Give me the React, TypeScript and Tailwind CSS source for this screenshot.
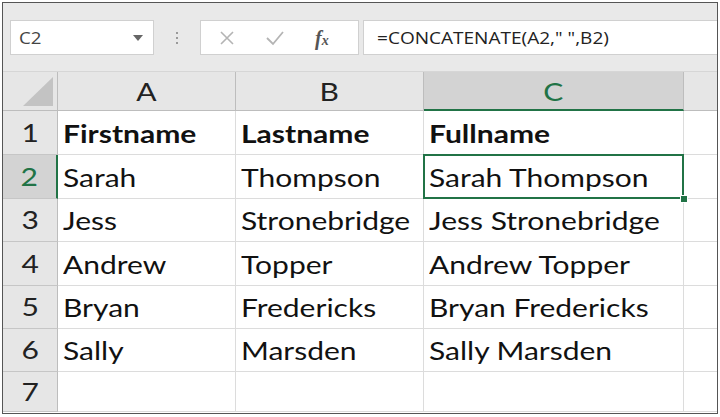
const cols = ["A", "B", "C"];
const rows = [
  ["Firstname", "Lastname", "Fullname"],
  ["Sarah", "Thompson", "Sarah Thompson"],
  ["Jess", "Stronebridge", "Jess Stronebridge"],
  ["Andrew", "Topper", "Andrew Topper"],
  ["Bryan", "Fredericks", "Bryan Fredericks"],
  ["Sally", "Marsden", "Sally Marsden"],
  ["", "", ""],
];
const heights = ["h-[44px]", "h-[44px]", "h-[43px]", "h-[44px]", "h-[43px]", "h-[43px]", "h-[40px]"];

function Toolbar() {
  return (
    <div className="h-[69px] bg-[#e9e9e9] flex items-start pt-[17px] pl-[7px] border-b border-[#d6d6d6] font-['Open_Sans',sans-serif]">
      {/* Name box */}
      <div className="w-[144px] h-[35px] bg-white border border-[#d0d0d0] flex items-center justify-between pl-[8px] pr-[10px]">
        <span className="inline-block origin-left scale-x-[1.1] text-[17px] text-[#444]">C2</span>
        <svg width="10" height="6" viewBox="0 0 10 6">
          <path d="M0 0 L10 0 L5 6 Z" fill="#666" />
        </svg>
      </div>
      {/* Dots */}
      <div className="w-[46px] h-[35px] flex flex-col items-center justify-center gap-[3px]">
        <span className="w-[2px] h-[2px] bg-[#9a9a9a]" />
        <span className="w-[2px] h-[2px] bg-[#9a9a9a]" />
        <span className="w-[2px] h-[2px] bg-[#9a9a9a]" />
      </div>
      {/* Cancel / enter / fx */}
      <div className="w-[159px] h-[35px] bg-white border border-[#d0d0d0] flex items-center pl-[18px] gap-[30px]">
        <svg width="16" height="16" viewBox="0 0 16 16">
          <path d="M2 2 L14 14 M14 2 L2 14" stroke="#b4b4b4" strokeWidth="1.6" />
        </svg>
        <svg width="20" height="16" viewBox="0 0 20 16">
          <path d="M2 8 L8 14 L18 2" stroke="#b4b4b4" strokeWidth="1.8" fill="none" />
        </svg>
        <span className="text-[20px] italic font-bold text-[#555] font-['Liberation_Serif',serif] leading-none">
          f<span className="text-[14px]">x</span>
        </span>
      </div>
      {/* Formula */}
      <div className="flex-1 ml-[4px] h-[35px] bg-white border border-[#d0d0d0] border-r-0 flex items-center pl-[13px]">
        <span className="inline-block origin-left scale-x-[1.12] text-[17px] text-[#222] whitespace-nowrap">
          =CONCATENATE(A2," ",B2)
        </span>
      </div>
    </div>
  );
}

function Wide({ children, center }: { children: React.ReactNode; center?: boolean }) {
  return (
    <span className={`inline-block scale-x-[1.2] ${center ? "origin-center" : "origin-left"}`}>
      {children}
    </span>
  );
}

export default function App() {
  return (
    <div className="w-[720px] h-[417px] bg-white pt-[2px] pl-[2px] font-['Lato',sans-serif]">
      <div className="w-[716px] h-[412px] border-[1.5px] border-[#555] overflow-hidden bg-white">
        <Toolbar />
        <div className="grid grid-cols-[55px_178px_188px_260px_1fr]">
          {/* header row */}
          <div className="h-[39px] bg-[#e6e6e6] border-r border-[#bdbdbd] border-b border-b-[#bdbdbd] flex items-end justify-end pr-[4px] pb-[4px]">
            <svg width="30" height="29" viewBox="0 0 30 29">
              <path d="M30 0 L30 29 L0 29 Z" fill="#c3c3c3" />
            </svg>
          </div>
          {cols.map((c) => (
            <div
              key={c}
              className={
                c === "C"
                  ? "h-[39px] bg-[#d3d3d3] border-r border-[#bdbdbd] border-b-2 border-b-[#217346] flex items-center justify-center pt-[2px] text-[25px] text-[#217346]"
                  : "h-[39px] bg-[#e6e6e6] border-r border-[#bdbdbd] border-b border-b-[#bdbdbd] flex items-center justify-center pt-[2px] text-[25px] text-[#222]"
              }
            >
              <Wide center>{c}</Wide>
            </div>
          ))}
          <div className="h-[39px] bg-[#e6e6e6] border-b border-b-[#bdbdbd]" />

          {rows.map((r, i) => {
            const n = i + 1;
            const h = heights[i];
            const sel = n === 2;
            return [
              <div
                key={`h${n}`}
                className={
                  sel
                    ? `${h} bg-[#d3d3d3] border-r-2 border-[#217346] border-b border-b-[#c6c6c6] flex items-center justify-center text-[25px] text-[#217346]`
                    : `${h} bg-[#e6e6e6] border-r border-[#bdbdbd] border-b border-b-[#c6c6c6] flex items-center justify-center text-[25px] text-[#222]`
                }
              >
                <Wide center>{n}</Wide>
              </div>,
              ...r.map((v, j) => (
                <div
                  key={`c${n}${j}`}
                  className={`${h} relative border-r border-b border-[#dcdcdc] flex items-center pl-[5px] pt-[2px] text-[25px] text-[#111] whitespace-nowrap ${
                    n === 1 ? "font-bold" : ""
                  }`}
                >
                  <Wide>{v}</Wide>
                  {sel && j === 2 && (
                    <>
                      <span className="absolute -inset-[1px] border-2 border-[#217346] pointer-events-none z-10" />
                      <span className="absolute -right-[5px] -bottom-[5px] w-[8px] h-[8px] bg-[#217346] border border-white z-20" />
                    </>
                  )}
                </div>
              )),
              <div key={`d${n}`} className={`${h} border-b border-[#dcdcdc]`} />,
            ];
          })}
        </div>
      </div>
    </div>
  );
}
